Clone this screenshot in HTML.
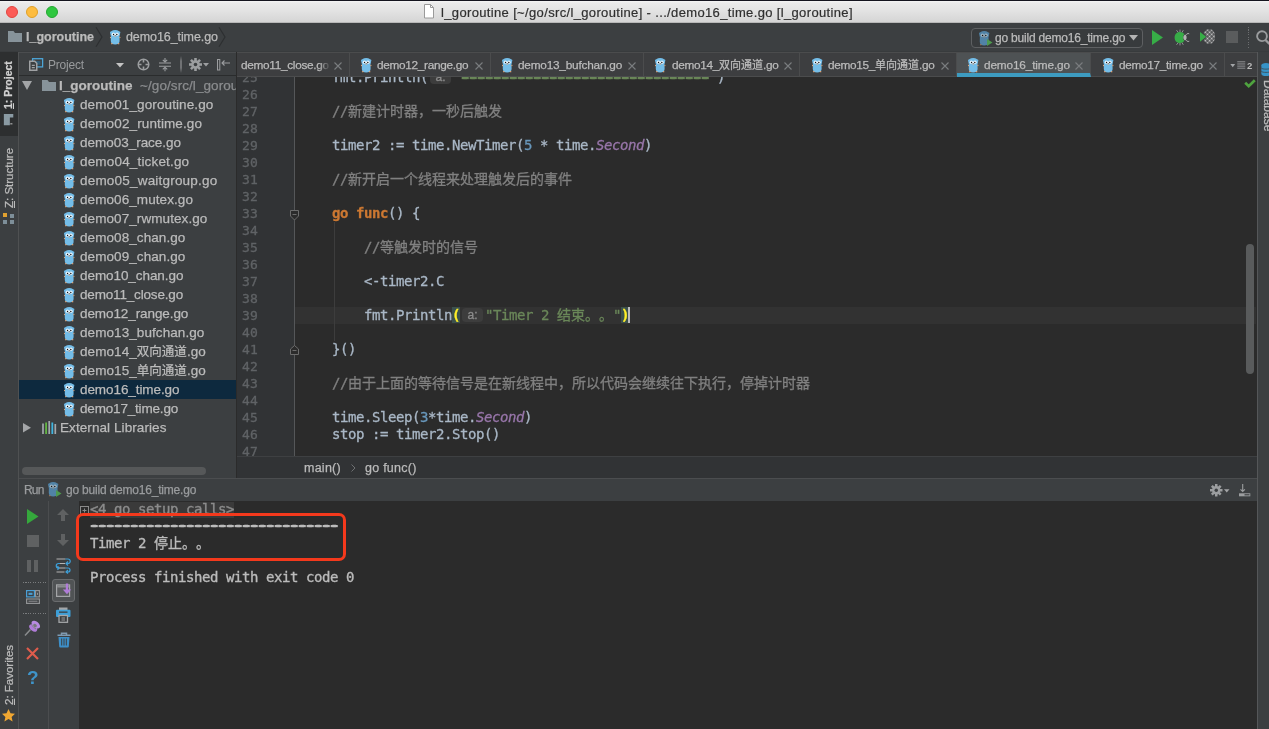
<!DOCTYPE html>
<html lang="zh">
<head>
<meta charset="utf-8">
<title>l_goroutine</title>
<style>
*{box-sizing:border-box;margin:0;padding:0}
html,body{width:1269px;height:729px;overflow:hidden;background:#3c3f41}
body{position:relative;font-family:"Liberation Sans","Noto Sans CJK SC",sans-serif;font-size:13px;color:#bbbbbb}
.abs{position:absolute}
svg{display:block;overflow:visible}
.gopher{position:absolute}
#titlebar{left:0;top:0;width:1269px;height:23px;background:linear-gradient(#f5f5f5 0,#eaeaea 2px,#e3e3e3 45%,#d5d5d5 100%);border-top:1px solid #14141e;border-bottom:1px solid #b8b8b8}
#titletext{left:441px;top:0;height:23px;line-height:23px;color:#303030;-webkit-text-stroke:0.2px #303030;font-size:13px;letter-spacing:0.35px;white-space:nowrap}
.tl{position:absolute;top:5px;width:12px;height:12px;border-radius:50%}
#nav{left:0;top:23px;width:1269px;height:29px;background:#3c3f41;border-bottom:1px solid #383b3d}
.navt{top:0;line-height:28px;font-size:12.5px;color:#bbbbbb;white-space:nowrap}
#runcfg{left:971px;top:5px;width:172px;height:20px;border:1px solid #5e6062;border-radius:4px;background:#383b3d}
#lstripe{left:0;top:52px;width:19px;height:677px;background:#3c3f41;border-right:1px solid #4f5152}
#rstripe{left:1257px;top:52px;width:12px;height:677px;background:#3c3f41;border-left:1.5px solid #555759}
#proj{left:19px;top:52px;width:218px;height:426px;background:#3c3f41;border-right:1px solid #2b2b2b;overflow:hidden}
#projhead{left:0;top:0;width:217px;height:24px;border-bottom:1px solid #2a2c2d;border-top:1px solid #4b4d4f}
.row{position:absolute;left:0;width:217px;height:19px;line-height:19px;white-space:nowrap;color:#bbbbbb;font-size:13.5px;letter-spacing:0.08px}
.row.sel{background:#0d293e}
#tabs{left:237px;top:52px;width:1020px;height:25px;background:#3d3e40;border-top:1px solid #4b4c4d;box-shadow:inset 0 -1px 0 #4b4c4d;overflow:hidden}
.tab{position:absolute;top:0;height:24px;border-right:1px solid #4b4c4d;white-space:nowrap}
.tab.act{background:#4e5254;border-bottom:4px solid #3d9bc0}
.tt{top:0;line-height:25px;color:#bbbbbb;font-size:11.8px;letter-spacing:-0.3px}
#editor{left:237px;top:77px;width:1020px;height:380px;background:#2b2b2b;overflow:hidden}
#gutter{left:0;top:0;width:57px;height:380px;background:#313335;overflow:hidden}
.code,.ln{font-family:"DejaVu Sans Mono","Liberation Mono","Noto Sans CJK SC",monospace;font-size:13px;letter-spacing:0.174px;white-space:pre}
.cj{font-family:"Noto Sans CJK SC",sans-serif;font-size:14px;letter-spacing:0;line-height:0;text-spacing-trim:space-all}
.row .cj{font-size:12.5px}
.tt .cj{font-size:11px;letter-spacing:0}
.ds{text-shadow:-1.7px 0 0 currentColor,1.7px 0 0 currentColor,0 .5px 0 currentColor,-1.7px .5px 0 currentColor,1.7px .5px 0 currentColor}
.ln{position:absolute;left:5px;color:#606366;height:17px;line-height:17px}
.cl{position:absolute;left:95px;height:17px;line-height:17px;color:#a9b7c6;font-size:14px;letter-spacing:-0.428px;margin-top:0}
.cm{color:#808080}.kw{color:#cc7832;font-weight:bold}.st{color:#6a8759}.nu{color:#6897bb}.co{color:#9876aa;font-style:italic}
.br{color:#ffef28;font-weight:bold;background:#3b514d}
.hint{display:inline-block;width:21px;height:14px;line-height:14px;margin:0 2px 0 2px;border-radius:4px;background:#3d3d3d;color:#8c8c8c;font-family:"Liberation Sans",sans-serif;font-size:12px;letter-spacing:0;text-align:center;vertical-align:1px}
.caret{display:inline-block;width:2px;height:16px;background:#bbbbbb;vertical-align:-3px;margin-left:-1px}
#crumbs{left:237px;top:456px;width:1020px;height:22px;background:#313335;border-top:1px solid #3e4042;line-height:22px;font-size:12.5px;color:#bbbbbb;letter-spacing:0.25px}
#runhead{left:19px;top:478px;width:1238px;height:23px;background:#3c3f41;border-top:1px solid #4b4d4f;line-height:22px;font-size:12px;letter-spacing:-0.2px}
#runleft{left:19px;top:501px;width:30px;height:228px;background:#3c3f41;border-right:1px solid #4b4d4f}
#runleft2{left:49px;top:501px;width:30px;height:228px;background:#3c3f41}
#console{left:79px;top:501px;width:1178px;height:228px;background:#2b2b2b;overflow:hidden}
.con{position:absolute;left:11px;height:17px;line-height:17px;color:#bbbbbb;font-size:14px;letter-spacing:-0.428px;margin-top:-0.5px;-webkit-text-stroke:0.35px currentColor}
.con .cj{font-size:14px;letter-spacing:0}
.vt{position:absolute;white-space:nowrap;font-size:12px;color:#bbbbbb;transform-origin:0 0;line-height:13px}
.cl{-webkit-text-stroke:0.3px currentColor}
.ln{-webkit-text-stroke:0.3px currentColor}
.row,.tt,.navt,#crumbs,#runhead,#runcfg,.vt{-webkit-text-stroke:0.25px currentColor}

#titlebar,#nav,#lstripe,#rstripe,#proj,#tabs,#editor,#crumbs,#runhead,#runleft,#runleft2,#console{will-change:transform}

</style>
</head>
<body>
<svg width="0" height="0" style="position:absolute">
<defs>
<g id="gph">
<circle cx=".95" cy="2.500" r=".95" fill="#6ab4e2"/><circle cx="9.450" cy="2.500" r=".95" fill="#6ab4e2"/>
<path d="M5.200 0C2.200 0 .3 1.300.3 3.600c0 1 .3 1.700.6 2.600C.8 7.700.8 9.500.8 11c0 2.500 1.800 3.500 4.400 3.500s4.400-1 4.400-3.500c0-1.500 0-3.300-.100-4.800.3-.9.600-1.600.600-2.600C10.100 1.300 8.200 0 5.200 0z" fill="#74bde8"/>
<ellipse cx=".5" cy="7.500" rx=".55" ry=".8" fill="#e4a97c"/><ellipse cx="9.900" cy="7.500" rx=".55" ry=".8" fill="#e4a97c"/>
<ellipse cx="1.800" cy="13.700" rx=".8" ry=".65" fill="#e4a97c"/><ellipse cx="8.600" cy="13.700" rx=".8" ry=".65" fill="#e4a97c"/>
<circle cx="3.400" cy="4.300" r="1.750" fill="#e6f2fa"/><circle cx="7" cy="4.300" r="1.750" fill="#e6f2fa"/>
<circle cx="3.600" cy="4.500" r=".7" fill="#111"/><circle cx="6.800" cy="4.500" r=".7" fill="#111"/>
<ellipse cx="5.200" cy="4.600" rx=".6" ry=".9" fill="#fff"/>
<ellipse cx="5.200" cy="6.200" rx=".75" ry=".55" fill="#e0b090"/><ellipse cx="5.200" cy="5.700" rx=".65" ry=".4" fill="#4a3a30"/>
</g>
<g id="gphd">
<circle cx=".95" cy="2.500" r=".95" fill="#4a7a9b"/><circle cx="9.450" cy="2.500" r=".95" fill="#4a7a9b"/>
<path d="M5.200 0C2.200 0 .3 1.300.3 3.600c0 1 .3 1.700.6 2.600C.8 7.700.8 9.500.8 11c0 2.500 1.800 3.500 4.400 3.500s4.400-1 4.400-3.500c0-1.500 0-3.300-.100-4.800.3-.9.600-1.600.600-2.600C10.100 1.300 8.200 0 5.200 0z" fill="#5183a6"/>
<ellipse cx="1.800" cy="13.700" rx=".8" ry=".65" fill="#a07a5a"/>
<circle cx="3.400" cy="4.300" r="1.750" fill="#9fb3c0"/><circle cx="7" cy="4.300" r="1.750" fill="#9fb3c0"/>
<circle cx="3.600" cy="4.500" r=".7" fill="#111"/><circle cx="6.800" cy="4.500" r=".7" fill="#111"/>
<ellipse cx="5.200" cy="6" rx=".7" ry=".6" fill="#b09070"/>
</g>
<g id="gear"><g fill="#9c9ea0"><circle cx="6.500" cy="6.500" r="4.300"/><rect x="5.200" y="0" width="2.600" height="13"/><rect x="0" y="5.200" width="13" height="2.600"/><rect x="5.200" y="0" width="2.600" height="13" transform="rotate(45 6.500 6.500)"/><rect x="5.200" y="0" width="2.600" height="13" transform="rotate(-45 6.500 6.500)"/></g><circle cx="6.500" cy="6.500" r="1.800" fill="#3c3f41"/></g>
<pattern id="dots" width="3" height="3" patternUnits="userSpaceOnUse" patternTransform="rotate(45)"><rect width="3" height="3" fill="#4a4c4e"/><circle cx="1.500" cy="1.500" r="1" fill="#d2d2d2"/></pattern>
<g id="fold"><path d="M.5 .5h8v5.500l-4 4-4-4z" fill="#2b2b2b" stroke="#6c6c6c"/><path d="M2.500 4.500h4" stroke="#6c6c6c"/></g>
<g id="foldu"><path d="M.5 9.500h8V4l-4-3.500-4 3.500z" fill="#2b2b2b" stroke="#6c6c6c"/><path d="M2.500 5.500h4" stroke="#6c6c6c"/></g>
</defs>
</svg>
<div id="titlebar" class="abs">
  <div class="tl" style="left:6px;background:#fc5b57;border:0.5px solid #e2453f"></div>
  <div class="tl" style="left:26px;background:#fdbc40;border:0.5px solid #e0a028"></div>
  <div class="tl" style="left:46px;background:#2fc740;border:0.5px solid #24a732"></div>
  <svg class="abs" style="left:423px;top:3px" width="12" height="15" viewBox="0 0 12 15"><path d="M1.500 .5h6l3 3v10.500h-9z" fill="#fff" stroke="#9a9a9a"/><path d="M7.500 .5v3h3" fill="none" stroke="#9a9a9a"/></svg>
  <div id="titletext" class="abs">l_goroutine [~/go/src/l_goroutine] - .../demo16_time.go [l_goroutine]</div>
</div>
<div id="nav" class="abs">
  <svg class="abs" style="left:8px;top:8px" width="14" height="11" viewBox="0 0 14 11"><path d="M0 0h5.500l1.500 2H14v9H0z" fill="#87939a"/></svg>
  <div class="abs navt" style="left:26px;font-weight:bold">l_goroutine</div>
  <svg class="abs" style="left:95px;top:3.500px" width="9" height="20" viewBox="0 0 9 20"><path d="M1 .3l6 9.700L1 19.700" fill="none" stroke="#2d2f31" stroke-width="1.200"/></svg>
  <svg class="gopher" style="left:110.3px;top:7px" width="10.400" height="14.500" viewBox="0 0 10.400 14.500"><use href="#gph"/></svg>
  <div class="abs navt" style="left:126px;letter-spacing:-0.09px">demo16_time.go</div>
  <svg class="abs" style="left:218px;top:3.500px" width="9" height="20" viewBox="0 0 9 20"><path d="M1 .3l6 9.700L1 19.700" fill="none" stroke="#2d2f31" stroke-width="1.200"/></svg>
  <div class="abs" id="runcfg">
    <svg class="abs" style="left:7px;top:2px" width="14" height="15" viewBox="0 0 14 15"><use href="#gphd"/><path d="M8 8l5.500 3.500L8 15z" fill="#4e9a4e"/></svg>
    <div class="abs" style="left:23px;top:0;line-height:18px;font-size:12px;color:#bbb;letter-spacing:-0.2px">go build demo16_time.go</div>
    <svg class="abs" style="left:156.500px;top:6px" width="9" height="6" viewBox="0 0 9 6"><path d="M0 0h9L4.500 5.500z" fill="#b4b4b4"/></svg>
  </div>
  <svg class="abs" style="left:1152px;top:7px" width="12" height="15" viewBox="0 0 12 15"><path d="M0 0l11 7.500L0 15z" fill="#37ad47"/></svg>
  <svg class="abs" style="left:1173px;top:5.500px" width="18" height="17" viewBox="0 0 18 17"><path d="M3.500 1.200l2 2.500M7 .6v2.600M10.300 1.200L8.800 3.700M3.500 15.800l2-2.500M7 16.400v-2.600M10.300 15.800l-1.500-2.500" stroke="#9a9c9e" stroke-width=".9" fill="none"/><path d="M7 3C3.500 3 1.600 5.500 1.600 8.500S3.500 14 7 14c1.600 0 3.100-.7 4.300-2-1.700-2-1.700-5 0-7C10.100 3.700 8.600 3 7 3z" fill="#37ad47"/><path d="M10.300 8.500c0-1.300.8-2.500 1.900-3 .9.700 1.400 1.800 1.400 3s-.5 2.300-1.400 3c-1.100-.5-1.900-1.700-1.900-3z" fill="#b4b4b4"/><path d="M13.300 5.600c.8-1 1.900-1.300 2.900-.8M13.300 11.400c.8 1 1.900 1.300 2.900.8" stroke="#c4c4c4" stroke-width="1" fill="none"/></svg>
  <svg class="abs" style="left:1199px;top:5px" width="17" height="17" viewBox="0 0 17 17"><path d="M4.500 4.500L8 1.200l5 .3 3 4v6l-3 4-5 .3-3.500-3.300 3-4z" fill="url(#dots)"/><path d="M1 4l6.200 4.800L1 13.800z" fill="#37ad47"/></svg>
  <div class="abs" style="left:1226px;top:8px;width:12px;height:12px;background:#5a5c5d"></div>
  <div class="abs" style="left:1248px;top:4px;width:1px;height:22px;background:repeating-linear-gradient(#6c6e70 0 1px,transparent 1px 2.500px)"></div>
  <svg class="abs" style="left:1255px;top:6px" width="14" height="18" viewBox="0 0 14 18"><circle cx="7" cy="7.200" r="4.900" fill="none" stroke="#9a9c9e" stroke-width="1.900"/><path d="M10.500 11l4 4" stroke="#9a9c9e" stroke-width="2.400"/></svg>
</div>
<div id="lstripe" class="abs">
  <div class="abs" style="left:0;top:0;width:18px;height:84px;background:#2d2f30"></div>
  <div class="vt" style="left:2px;top:57px;transform:rotate(-90deg);font-weight:bold;color:#d0d0d0;font-size:10.500px"><u>1</u>: Project</div>
  <svg class="abs" style="left:3px;top:62px" width="12" height="12" viewBox="0 0 12 14"><path d="M0 0h11v4H7v9H0z" fill="#8a9aa3"/><path d="M7.500 11.500h2.500" stroke="#ddd" stroke-width="1"/></svg>
  <div class="vt" style="left:3px;top:156px;transform:rotate(-90deg);font-size:11.500px"><u>Z</u>: Structure</div>
  <svg class="abs" style="left:3px;top:161px" width="12" height="12" viewBox="0 0 12 12"><rect x="0" y="0" width="4" height="4" fill="#e0a030"/><rect x="7" y="1" width="4" height="4" fill="#7d8e98"/><rect x="0" y="7" width="4" height="4" fill="#7d8e98"/><rect x="7" y="7" width="4" height="4" fill="#7d8e98"/></svg>
  <div class="vt" style="left:3px;top:653px;transform:rotate(-90deg);font-size:11.500px"><u>2</u>: Favorites</div>
  <svg class="abs" style="left:2px;top:657px" width="13" height="13" viewBox="0 0 13 13"><path d="M6.500 0l2 4.300 4.500.5-3.400 3.100 1 4.600-4.100-2.400-4.100 2.400 1-4.600L0 4.800l4.500-.5z" fill="#f0a732"/></svg>
</div>
<div id="rstripe" class="abs">
  <svg class="abs" style="left:3px;top:10.500px" width="10" height="13" viewBox="0 0 10 14"><path d="M0 2.500C0 1 2 0 5 0s5 1 5 2.500v9C10 13 8 14 5 14s-5-1-5-2.500z" fill="#3793c6"/><path d="M0 5.500c1 1.500 9 1.500 10 0M0 9c1 1.500 9 1.500 10 0" stroke="#3c3f41" stroke-width=".8" fill="none"/></svg>
  <div class="vt" style="left:15.500px;top:28px;transform:rotate(90deg)">Database</div>
</div>
<div id="proj" class="abs">
<div id="projhead" class="abs"><svg class="abs" style="left:10px;top:4.500px" width="15" height="13" viewBox="0 0 15 13"><rect x="3.600" y=".7" width="10" height="8.200" fill="#3c3f41" stroke="#4da6d8" stroke-width="1.300"/><rect x="6" y="3" width="5.500" height="3.700" fill="#2f5c78"/><path d="M.75 3.250h5l2 2v7h-7z" fill="#3c3f41" stroke="#a0a2a4" stroke-width="1.500"/><path d="M2.800 7.300h3M2.800 9.700h3" stroke="#a0a2a4" stroke-width="1.200"/></svg>
<div class="abs" style="left:29px;top:0;line-height:24px;font-size:12px;color:#999b9d;letter-spacing:-0.2px">Project</div>
<svg class="abs" style="left:97px;top:10px" width="8" height="5" viewBox="0 0 8 5"><path d="M0 0h8L4 4.500z" fill="#c4c4c4"/></svg>
<svg class="abs" style="left:118px;top:5px" width="13" height="13" viewBox="0 0 13 13"><circle cx="6.500" cy="6.500" r="5.300" fill="none" stroke="#9c9ea0" stroke-width="1.500"/><path d="M6.500 1v3.500M6.500 8.500V12M1 6.500h3.500M8.500 6.500H12" stroke="#9c9ea0" stroke-width="1.600"/></svg>
<svg class="abs" style="left:140px;top:5px" width="12" height="14" viewBox="0 0 12 14"><path d="M0 5h12M0 8.200h12" stroke="#9c9ea0" stroke-width="1.100"/><path d="M6 0v3.800M3.800 1.800L6 4l2.200-2.200M6 13.200V9.400M3.800 11.400L6 9.200l2.200 2.200" fill="none" stroke="#9c9ea0" stroke-width="1.100"/></svg>
<div class="abs" style="left:161px;top:3px;width:1.500px;height:17px;background:linear-gradient(#3c3f41,#707274 30%,#707274 70%,#3c3f41)"></div>
<svg class="abs" style="left:169.500px;top:5px" width="13" height="13" viewBox="0 0 13 13"><use href="#gear"/></svg>
<svg class="abs" style="left:184px;top:10px" width="6" height="4" viewBox="0 0 6 4"><path d="M0 0h6L3 3.500z" fill="#9c9ea0"/></svg>
<svg class="abs" style="left:197px;top:6px" width="14" height="12" viewBox="0 0 14 12"><rect x="1.500" y=".5" width="2.300" height="10.500" fill="none" stroke="#9c9ea0"/><path d="M6 4h8M8.500 1.500L6 4l2.500 2.500" fill="none" stroke="#9c9ea0" stroke-width="1.100"/></svg>
</div><div class="row" style="top:24px"><svg class="abs" style="left:3px;top:5px" width="10" height="9" viewBox="0 0 10 9"><path d="M0 0h10L5 9z" fill="#a3a5a7"/></svg>
<svg class="abs" style="left:23px;top:4px" width="14" height="11" viewBox="0 0 14 11"><path d="M0 0h5.500l1.500 2H14v9H0z" fill="#87939a"/></svg>
<span class="abs" style="left:40px;font-weight:bold;letter-spacing:0">l_goroutine</span><span class="abs" style="left:121px;color:#8a8c8e">~/go/src/l_goroutine</span></div><div class="row" style="top:43px"><svg class="gopher" style="left:44.8px;top:2.8px" width="10.400" height="14.500" viewBox="0 0 10.400 14.500"><use href="#gph"/></svg><span class="abs" style="left:61px;letter-spacing:0.11px">demo01_goroutine.go</span></div><div class="row" style="top:62px"><svg class="gopher" style="left:44.8px;top:2.8px" width="10.400" height="14.500" viewBox="0 0 10.400 14.500"><use href="#gph"/></svg><span class="abs" style="left:61px;letter-spacing:0.12px">demo02_runtime.go</span></div><div class="row" style="top:81px"><svg class="gopher" style="left:44.8px;top:2.8px" width="10.400" height="14.500" viewBox="0 0 10.400 14.500"><use href="#gph"/></svg><span class="abs" style="left:61px;letter-spacing:-0.02px">demo03_race.go</span></div><div class="row" style="top:100px"><svg class="gopher" style="left:44.8px;top:2.8px" width="10.400" height="14.500" viewBox="0 0 10.400 14.500"><use href="#gph"/></svg><span class="abs" style="left:61px;letter-spacing:0.17px">demo04_ticket.go</span></div><div class="row" style="top:119px"><svg class="gopher" style="left:44.8px;top:2.8px" width="10.400" height="14.500" viewBox="0 0 10.400 14.500"><use href="#gph"/></svg><span class="abs" style="left:61px;letter-spacing:0.2px">demo05_waitgroup.go</span></div><div class="row" style="top:138px"><svg class="gopher" style="left:44.8px;top:2.8px" width="10.400" height="14.500" viewBox="0 0 10.400 14.500"><use href="#gph"/></svg><span class="abs" style="left:61px">demo06_mutex.go</span></div><div class="row" style="top:157px"><svg class="gopher" style="left:44.8px;top:2.8px" width="10.400" height="14.500" viewBox="0 0 10.400 14.500"><use href="#gph"/></svg><span class="abs" style="left:61px">demo07_rwmutex.go</span></div><div class="row" style="top:176px"><svg class="gopher" style="left:44.8px;top:2.8px" width="10.400" height="14.500" viewBox="0 0 10.400 14.500"><use href="#gph"/></svg><span class="abs" style="left:61px">demo08_chan.go</span></div><div class="row" style="top:195px"><svg class="gopher" style="left:44.8px;top:2.8px" width="10.400" height="14.500" viewBox="0 0 10.400 14.500"><use href="#gph"/></svg><span class="abs" style="left:61px">demo09_chan.go</span></div><div class="row" style="top:214px"><svg class="gopher" style="left:44.8px;top:2.8px" width="10.400" height="14.500" viewBox="0 0 10.400 14.500"><use href="#gph"/></svg><span class="abs" style="left:61px;letter-spacing:-0.07px">demo10_chan.go</span></div><div class="row" style="top:233px"><svg class="gopher" style="left:44.8px;top:2.8px" width="10.400" height="14.500" viewBox="0 0 10.400 14.500"><use href="#gph"/></svg><span class="abs" style="left:61px;letter-spacing:-0.17px">demo11_close.go</span></div><div class="row" style="top:252px"><svg class="gopher" style="left:44.8px;top:2.8px" width="10.400" height="14.500" viewBox="0 0 10.400 14.500"><use href="#gph"/></svg><span class="abs" style="left:61px;letter-spacing:-0.09px">demo12_range.go</span></div><div class="row" style="top:271px"><svg class="gopher" style="left:44.8px;top:2.8px" width="10.400" height="14.500" viewBox="0 0 10.400 14.500"><use href="#gph"/></svg><span class="abs" style="left:61px">demo13_bufchan.go</span></div><div class="row" style="top:290px"><svg class="gopher" style="left:44.8px;top:2.8px" width="10.400" height="14.500" viewBox="0 0 10.400 14.500"><use href="#gph"/></svg><span class="abs" style="left:61px">demo14_<span class="cj">双向通道</span>.go</span></div><div class="row" style="top:309px"><svg class="gopher" style="left:44.8px;top:2.8px" width="10.400" height="14.500" viewBox="0 0 10.400 14.500"><use href="#gph"/></svg><span class="abs" style="left:61px">demo15_<span class="cj">单向通道</span>.go</span></div><div class="row sel" style="top:328px"><svg class="gopher" style="left:44.8px;top:2.8px" width="10.400" height="14.500" viewBox="0 0 10.400 14.500"><use href="#gph"/></svg><span class="abs" style="left:61px;letter-spacing:-0.08px">demo16_time.go</span></div><div class="row" style="top:347px"><svg class="gopher" style="left:44.8px;top:2.8px" width="10.400" height="14.500" viewBox="0 0 10.400 14.500"><use href="#gph"/></svg><span class="abs" style="left:61px;letter-spacing:-0.18px">demo17_time.go</span></div><div class="row" style="top:366px"><svg class="abs" style="left:4px;top:5px" width="8" height="9.500" viewBox="0 0 8 9.500"><path d="M0 0l8 4.750L0 9.500z" fill="#a3a5a7"/></svg>
<svg class="abs" style="left:23px;top:3px" width="15" height="13" viewBox="0 0 15 13"><path d="M1 2.500v10.500M7.200 0v13M13.300 3v10" stroke-width="1.700" stroke="#a3a8ad"/><path d="M4.100 1.500v11.500" stroke="#62b543" stroke-width="1.800"/><path d="M10.300 1.500v11.500" stroke="#40b6e0" stroke-width="1.800"/></svg>
<span class="abs" style="left:41px">External Libraries</span></div><div class="abs" style="left:3px;top:415px;width:184px;height:8px;border-radius:4px;background:#565859"></div></div>
<div id="tabs" class="abs"><div class="tab" style="left:0px;width:113px"><span class="abs tt" style="left:4px;width:90px;overflow:hidden;-webkit-mask-image:linear-gradient(90deg,#000 78px,transparent 90px);mask-image:linear-gradient(90deg,#000 78px,transparent 90px)">demo11_close.go</span><svg class="abs" style="left:97px;top:9px" width="8" height="8" viewBox="0 0 8 8"><path d="M.5 .5l7 7M7.500 .5l-7 7" stroke="#7a7d7f" stroke-width="1.100"/></svg></div><div class="tab" style="left:113px;width:141px"><svg class="gopher" style="left:10.8px;top:4.8px" width="10.400" height="14.500" viewBox="0 0 10.400 14.500"><use href="#gph"/></svg><span class="abs tt" style="left:27px">demo12_range.go</span><svg class="abs" style="left:125px;top:9px" width="8" height="8" viewBox="0 0 8 8"><path d="M.5 .5l7 7M7.500 .5l-7 7" stroke="#7a7d7f" stroke-width="1.100"/></svg></div><div class="tab" style="left:254px;width:153px"><svg class="gopher" style="left:10.8px;top:4.8px" width="10.400" height="14.500" viewBox="0 0 10.400 14.500"><use href="#gph"/></svg><span class="abs tt" style="left:27px;letter-spacing:-0.21px">demo13_bufchan.go</span><svg class="abs" style="left:137px;top:9px" width="8" height="8" viewBox="0 0 8 8"><path d="M.5 .5l7 7M7.500 .5l-7 7" stroke="#7a7d7f" stroke-width="1.100"/></svg></div><div class="tab" style="left:407px;width:156px"><svg class="gopher" style="left:10.8px;top:4.8px" width="10.400" height="14.500" viewBox="0 0 10.400 14.500"><use href="#gph"/></svg><span class="abs tt" style="left:28px">demo14_<span class="cj">双向通道</span>.go</span><svg class="abs" style="left:140px;top:9px" width="8" height="8" viewBox="0 0 8 8"><path d="M.5 .5l7 7M7.500 .5l-7 7" stroke="#7a7d7f" stroke-width="1.100"/></svg></div><div class="tab" style="left:563px;width:157px"><svg class="gopher" style="left:11.8px;top:4.8px" width="10.400" height="14.500" viewBox="0 0 10.400 14.500"><use href="#gph"/></svg><span class="abs tt" style="left:28px">demo15_<span class="cj">单向通道</span>.go</span><svg class="abs" style="left:141px;top:9px" width="8" height="8" viewBox="0 0 8 8"><path d="M.5 .5l7 7M7.500 .5l-7 7" stroke="#7a7d7f" stroke-width="1.100"/></svg></div><div class="tab act" style="left:720px;width:134px"><svg class="gopher" style="left:10.8px;top:4.8px" width="10.400" height="14.500" viewBox="0 0 10.400 14.500"><use href="#gph"/></svg><span class="abs tt" style="left:27px;letter-spacing:-0.14px">demo16_time.go</span><svg class="abs" style="left:118px;top:9px" width="8" height="8" viewBox="0 0 8 8"><path d="M.5 .5l7 7M7.500 .5l-7 7" stroke="#7a7d7f" stroke-width="1.100"/></svg></div><div class="tab" style="left:854px;width:134px"><svg class="gopher" style="left:11.8px;top:4.8px" width="10.400" height="14.500" viewBox="0 0 10.400 14.500"><use href="#gph"/></svg><span class="abs tt" style="left:28px">demo17_time.go</span><svg class="abs" style="left:118px;top:9px" width="8" height="8" viewBox="0 0 8 8"><path d="M.5 .5l7 7M7.500 .5l-7 7" stroke="#7a7d7f" stroke-width="1.100"/></svg></div><svg class="abs" style="left:993px;top:10.500px" width="5.500" height="3.500" viewBox="0 0 7 5"><path d="M0 0h7L3.500 4.500z" fill="#a3a5a7"/></svg>
<svg class="abs" style="left:1000px;top:8px" width="8.500" height="8" viewBox="0 0 10 10"><path d="M0 1h10M0 3.700h10M0 6.400h10M0 9h10" stroke="#a3a5a7" stroke-width="1"/></svg>
<div class="abs" style="left:1010px;top:0;line-height:25px;font-size:9.500px;color:#bbb;font-weight:bold">2</div></div>
<div id="editor" class="abs"><div class="abs" style="left:0;top:230px;width:1019px;height:17px;background:#323232"></div><div id="gutter" class="abs"><div class="ln" style="top:-8px">25</div><div class="ln" style="top:9px">26</div><div class="ln" style="top:26px">27</div><div class="ln" style="top:43px">28</div><div class="ln" style="top:60px">29</div><div class="ln" style="top:77px">30</div><div class="ln" style="top:94px">31</div><div class="ln" style="top:111px">32</div><div class="ln" style="top:128px">33</div><div class="ln" style="top:145px">34</div><div class="ln" style="top:162px">35</div><div class="ln" style="top:179px">36</div><div class="ln" style="top:196px">37</div><div class="ln" style="top:213px">38</div><div class="ln" style="top:230px">39</div><div class="ln" style="top:247px">40</div><div class="ln" style="top:264px">41</div><div class="ln" style="top:281px">42</div><div class="ln" style="top:298px">43</div><div class="ln" style="top:315px">44</div><div class="ln" style="top:332px">45</div><div class="ln" style="top:349px">46</div><div class="ln" style="top:366px">47</div></div><div class="abs" style="left:57px;top:0;width:1px;height:380px;background:#555759"></div><div class="abs" style="left:97px;top:145px;width:1px;height:119px;background:#3d3d3d"></div><svg class="abs" style="left:53px;top:133px" width="9" height="11" viewBox="0 0 9 11"><use href="#fold"/></svg><svg class="abs" style="left:53px;top:268px" width="9" height="11" viewBox="0 0 9 11"><use href="#foldu"/></svg><div class="cl code" style="top:-8px"><span style="margin-left:0">fmt.Println(</span><span class="hint">a:</span><span class="st">"<span class="ds">-------------------------------</span>"</span>)</div><div class="cl code" style="top:26px"><span class="cm">//<span class="cj">新建计时器，一秒后触发</span></span></div><div class="cl code" style="top:60px">timer2 := time.NewTimer(<span class="nu">5</span> * time.<span class="co">Second</span>)</div><div class="cl code" style="top:94px"><span class="cm">//<span class="cj">新开启一个线程来处理触发后的事件</span></span></div><div class="cl code" style="top:128px"><span class="kw">go func</span>() {</div><div class="cl code" style="top:162px">    <span class="cm">//<span class="cj">等触发时的信号</span></span></div><div class="cl code" style="top:196px">    &lt;-timer2.C</div><div class="cl code" style="top:230px">    fmt.Println<span class="br">(</span><span class="hint">a:</span><span class="st">"Timer 2 <span class="cj">结束。。</span>"</span><span class="br">)</span><span class="caret"></span></div><div class="cl code" style="top:264px">}()</div><div class="cl code" style="top:298px"><span class="cm">//<span class="cj">由于上面的等待信号是在新线程中，所以代码会继续往下执行，停掉计时器</span></span></div><div class="cl code" style="top:332px">time.Sleep(<span class="nu">3</span>*time.<span class="co">Second</span>)</div><div class="cl code" style="top:349px">stop := timer2.Stop()</div><div class="abs" style="left:1009px;top:167px;width:8px;height:130px;border-radius:4px;background:#595b5c"></div><svg class="abs" style="left:1006.500px;top:2px" width="12" height="9" viewBox="0 0 12 9"><path d="M1.200 3.800l3.500 3.400L10.800 1.200" fill="none" stroke="#4fa33f" stroke-width="2.700"/></svg></div>
<div id="crumbs" class="abs"><span class="abs" style="left:67px">main()</span><svg class="abs" style="left:114px;top:7px" width="5" height="8" viewBox="0 0 5 8"><path d="M.5 .5l3.500 3.500L.5 7.500" fill="none" stroke="#6e7072"/></svg><span class="abs" style="left:128px">go func()</span></div>
<div id="runhead" class="abs"><span class="abs" style="left:5px;color:#9a9c9e;letter-spacing:-0.8px">Run</span>
<svg class="abs" style="left:29px;top:3px" width="14" height="15" viewBox="0 0 14 15"><use href="#gphd"/><path d="M8 8l5.500 3.500L8 15z" fill="#4e9a4e"/></svg>
<span class="abs" style="left:47px;color:#9a9c9e">go build demo16_time.go</span>
<svg class="abs" style="left:1191px;top:5px" width="12.500" height="12.500" viewBox="0 0 13 13"><use href="#gear"/></svg>
<svg class="abs" style="left:1205px;top:10px" width="5.500" height="4" viewBox="0 0 6 4"><path d="M0 0h6L3 3.500z" fill="#a3a5a7"/></svg>
<svg class="abs" style="left:1220px;top:5px" width="12" height="13" viewBox="0 0 12 13"><path d="M3.700 0v7.500M1.500 5.300l2.200 2.200 2.200-2.200" fill="none" stroke="#9c9ea0" stroke-width="1.100"/><rect x="0" y="9.300" width="11.300" height="3" fill="#9c9ea0"/><rect x="5.500" y="10.200" width="5" height="1.200" fill="#3c3f41"/></svg>
</div>
<div id="runleft" class="abs">
<svg class="abs" style="left:8px;top:8px" width="12" height="15" viewBox="0 0 12 15"><path d="M0 0l11.500 7.500L0 15z" fill="#35a83c"/></svg>
<div class="abs" style="left:8px;top:34px;width:12px;height:12px;background:#5f6162"></div>
<div class="abs" style="left:8px;top:59px;width:4px;height:12px;background:#5f6162"></div><div class="abs" style="left:15px;top:59px;width:4px;height:12px;background:#5f6162"></div>
<div class="abs" style="left:4px;top:81px;width:23px;height:1px;background:repeating-linear-gradient(90deg,#7a7c7e 0 1px,transparent 1px 2.500px)"></div>
<svg class="abs" style="left:7px;top:89px" width="14" height="14" viewBox="0 0 14 14"><rect x="9.600" y=".6" width="3.800" height="6.300" fill="none" stroke="#909294" stroke-width="1.200"/><rect x="11" y="2.700" width="1" height="2.200" fill="#909294"/><rect x=".6" y="9" width="12.800" height="4.400" fill="none" stroke="#909294" stroke-width="1.200"/><rect x="2.500" y="10.700" width="9" height="1" fill="#909294"/><rect x=".6" y=".6" width="7.800" height="6.300" fill="none" stroke="#4a9fd5" stroke-width="1.200"/><rect x="2.500" y="2.700" width="4" height="2.200" fill="#4a9fd5"/></svg>
<div class="abs" style="left:4px;top:112px;width:23px;height:1px;background:repeating-linear-gradient(90deg,#7a7c7e 0 1px,transparent 1px 2.500px)"></div>
<svg class="abs" style="left:6px;top:119px" width="16" height="16" viewBox="0 0 16 16"><path d="M0 15.500l5.500-6" stroke="#8a8c8e" stroke-width="1.500"/><ellipse cx="8.200" cy="8" rx="4.600" ry="2.800" transform="rotate(40 8.200 8)" fill="#b07cd8"/><path d="M6.500 5.500l4 4 1.500-2.500-3-3z" fill="#808284"/><ellipse cx="10.800" cy="4.600" rx="5" ry="3" transform="rotate(40 10.800 4.600)" fill="#b88ae0"/><ellipse cx="10" cy="5.500" rx="2" ry="1.500" transform="rotate(40 10 5.500)" fill="#77797b"/></svg>
<svg class="abs" style="left:7px;top:146px" width="13" height="13" viewBox="0 0 13 13"><path d="M1 1l11 11M12 1L1 12" stroke="#de5c4c" stroke-width="2.200"/></svg>
<div class="abs" style="left:8px;top:165px;font-size:19px;line-height:24px;font-weight:bold;color:#3f94c9">?</div>
</div>
<div id="runleft2" class="abs">
<svg class="abs" style="left:8px;top:8px" width="12" height="12" viewBox="0 0 12 12"><path d="M6 0l6 6H8v6H4V6H0z" fill="#5f6162"/></svg>
<svg class="abs" style="left:8px;top:33px" width="12" height="12" viewBox="0 0 12 12"><path d="M6 12l6-6H8V0H4v6H0z" fill="#5f6162"/></svg>
<svg class="abs" style="left:6.500px;top:56.500px" width="15" height="15" viewBox="0 0 15 15"><path d="M.5 1h9M4 5.500h5M1.500 10h8M.5 14h8" stroke="#b4b4b4" stroke-width="1.100"/><path d="M9.500 1h2.500a2 2 0 0 1 0 4.500H10M12 3.500L10 5.500l2 2M4 5.500H2.500a2 2 0 0 0 0 4.500M1.500 8l1.500 2-1.500 2M9.500 10h2.500a2 2 0 0 1 0 4H10M12 12l-2 2 2 1.500" fill="none" stroke="#3d9fd8" stroke-width="1.200"/></svg>
<div class="abs" style="left:3px;top:78px;width:23px;height:23px;border:1px solid #6a6c6e;border-radius:3px;background:#505355"></div>
<svg class="abs" style="left:7px;top:82px" width="16" height="15" viewBox="0 0 16 15"><rect x=".6" y="1.900" width="13" height="11.500" fill="#5a5c5e" stroke="#a4a6a8" stroke-width="1.200"/><rect x="1.200" y="2.500" width="11.800" height="2" fill="#8a8c8e"/><path d="M11 .5v6.500" stroke="#b07cd8" stroke-width="2.400"/><path d="M6.800 6.500h8.400L11 11.200z" fill="#b07cd8"/></svg>
<svg class="abs" style="left:7px;top:106px" width="15" height="16" viewBox="0 0 15 16"><rect x="3" y=".5" width="8.500" height="3" fill="#a4a6a8"/><rect x="0" y="2.800" width="14.500" height="7.300" rx="1" fill="#3d9fd8"/><rect x="3" y="4.500" width="8.500" height="1.300" fill="#3c3f41"/><rect x="3" y="8.500" width="8.500" height="6.800" fill="#3c3f41" stroke="#a4a6a8" stroke-width="1.300"/><path d="M5.500 11h3.500M5.500 13h3.500" stroke="#a4a6a8" stroke-width=".9"/></svg>
<svg class="abs" style="left:7.500px;top:131px" width="14" height="16" viewBox="0 0 14 16"><path d="M.5 3.300h13M4.500 3V1.200h5V3" fill="none" stroke="#7f9ab0" stroke-width="1.500"/><path d="M1.500 5h11l-.7 9.500a1 1 0 0 1-1 1H3.200a1 1 0 0 1-1-1z" fill="#3d8fc8"/><path d="M4.700 6.500v7M7 6.500v7M9.300 6.500v7" stroke="#3c3f41" stroke-width="1"/></svg>
</div>
<div id="console" class="abs">
<div class="abs" style="left:11px;top:1px;width:144px;height:16px;background:#3a3a3a"></div>
<svg class="abs" style="left:1px;top:5px" width="9" height="9" viewBox="0 0 9 9"><rect x=".5" y=".5" width="8" height="8" fill="none" stroke="#8a8a8a"/><path d="M2.500 4.500h4M4.500 2.500v4" stroke="#8a8a8a"/></svg>
<div class="con code" style="top:0px;color:#8c8c8c">&lt;4 go setup calls&gt;</div>
<div class="con code ds" style="top:16px">-------------------------------</div>
<div class="con code" style="top:34px">Timer 2 <span class="cj">停止。。</span></div>
<div class="con code" style="top:68px">Process finished with exit code 0</div>
</div>
<div class="abs" style="left:76px;top:512.5px;width:270px;height:48.5px;border:3px solid #f4391c;border-radius:7px"></div>
</body>
</html>
